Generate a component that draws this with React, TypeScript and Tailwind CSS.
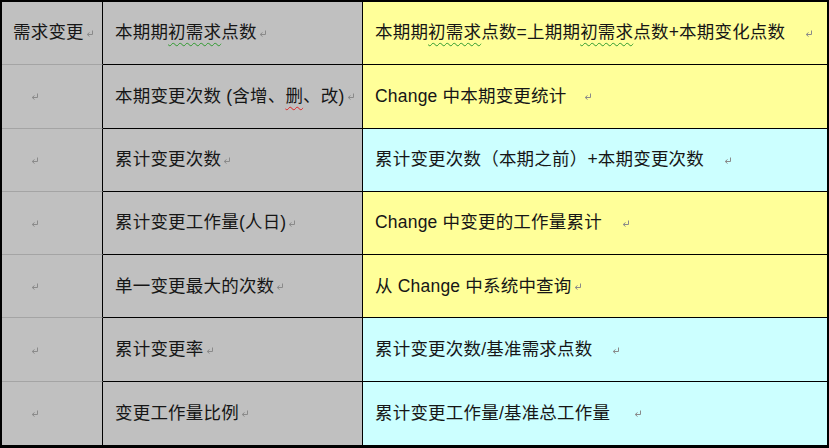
import type { ReactNode } from 'react';

// Word-style paragraph mark (↵) shown after each cell's text
function Mark({ gap = 'ml-[2px]' }: { gap?: string }) {
  return (
    <svg
      viewBox="0 0 8 8"
      className={`inline-block w-[8px] h-[8px] align-middle ${gap} relative top-[1px]`}
      aria-hidden="true"
    >
      <path d="M6.5 0.5 V4.5 H1.5" fill="none" stroke="#8a8a8a" strokeWidth="1" />
      <path d="M3.5 2.5 L1.2 4.5 L3.5 6.5" fill="none" stroke="#8a8a8a" strokeWidth="1" />
    </svg>
  );
}

const Green = ({ children }: { children: ReactNode }) => (
  <span className="underline decoration-wavy decoration-[#2e9a2e] decoration-1 underline-offset-[4px]">
    {children}
  </span>
);

const Red = ({ children }: { children: ReactNode }) => (
  <span className="underline decoration-wavy decoration-[#e02020] decoration-1 underline-offset-[4px]">
    {children}
  </span>
);

type Row = {
  first?: ReactNode;
  name: ReactNode;
  rule: ReactNode;
  tone: 'yellow' | 'cyan';
  gap: string; // space before the paragraph mark in the formula column
};

const ROWS: Row[] = [
  {
    first: '需求变更',
    name: (
      <>
        本期期<Green>初需求</Green>点数
      </>
    ),
    rule: (
      <>
        本期期<Green>初需求</Green>点数=上期期<Green>初需求</Green>点数+本期变化点数
      </>
    ),
    tone: 'yellow',
    gap: 'ml-[20px]',
  },
  {
    name: (
      <>
        本期变更次数 (含增、<Red>删</Red>、改)
      </>
    ),
    rule: 'Change 中本期变更统计',
    tone: 'yellow',
    gap: 'ml-[18px]',
  },
  {
    name: '累计变更次数',
    rule: '累计变更次数（本期之前）+本期变更次数',
    tone: 'cyan',
    gap: 'ml-[20px]',
  },
  {
    name: '累计变更工作量(人日)',
    rule: 'Change 中变更的工作量累计',
    tone: 'yellow',
    gap: 'ml-[20px]',
  },
  { name: '单一变更最大的次数', rule: '从 Change 中系统中查询', tone: 'yellow', gap: 'ml-[2px]' },
  { name: '累计变更率', rule: '累计变更次数/基准需求点数', tone: 'cyan', gap: 'ml-[20px]' },
  { name: '变更工作量比例', rule: '累计变更工作量/基准总工作量', tone: 'cyan', gap: 'ml-[24px]' },
];

export default function App() {
  return (
    <div
      className="w-[829px] h-[448px] bg-white text-[#161616] text-[17.5px] leading-none tracking-[0.2px]"
      style={{ fontFamily: '"Liberation Sans", "Noto Sans CJK SC", sans-serif' }}
    >
      <div className="w-full h-full flex flex-col border-l-2 border-t-2 border-r-2 border-b-[3px] border-black">
        {ROWS.map((row, i) => {
          const last = i === ROWS.length - 1;
          return (
            <div key={i} className="flex-1 grid grid-cols-[101px_260px_1fr]">
              {/* Category column */}
              <div
                className={`bg-[#c0c0c0] border-r border-black flex items-center ${
                  last ? '' : 'border-b border-b-[#a4a4a4]'
                } ${row.first ? 'pl-[11px]' : 'pl-[29px]'}`}
              >
                {row.first}
                <Mark gap={row.first ? 'ml-[2px]' : 'ml-0'} />
              </div>

              {/* Metric column */}
              <div
                className={`bg-[#c0c0c0] border-r border-black flex items-center pl-[12px] whitespace-nowrap ${
                  last ? '' : 'border-b'
                }`}
              >
                {row.name}
                <Mark />
              </div>

              {/* Formula column */}
              <div
                className={`flex items-center pl-[12px] whitespace-nowrap border-black ${
                  row.tone === 'yellow' ? 'bg-[#ffff99]' : 'bg-[#ccffff]'
                } ${last ? '' : 'border-b'}`}
              >
                {row.rule}
                <Mark gap={row.gap} />
              </div>
            </div>
          );
        })}
      </div>
    </div>
  );
}
